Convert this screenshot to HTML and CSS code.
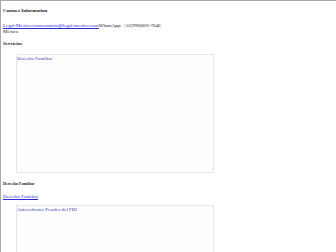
FILE: index.html
```html
<!DOCTYPE html>
<html lang="es">
<head>
    <meta charset="UTF-8">
    <meta name="viewport" content="width=device-width, initial-scale=1.0">
    <title>Legal Mexico</title>
    <link rel="stylesheet" href="styles.css">
</head>
<body>
    <div class="page">
        <h4 class="heading">Contact Information</h4>
        <p class="contact"><a href="#">Legal-Mexico.comcontacto@legal-mexico.com</a>WhatsApp: +52(998)820-7646<br>México</p>

        <h4 class="heading">Servicios</h4>
        <div class="frame">
            <span class="frame-title">Derecho Familiar</span>
        </div>

        <h5 class="subheading">Derecho Familiar</h5>
        <p class="service-link"><a href="#">Derecho Familiar</a></p>
        <div class="frame">
            <span class="frame-title">Antecedentes Penales del FBI</span>
        </div>
    </div>
</body>
</html>
```

FILE: styles.css
```css
html, body {
    margin: 0;
    padding: 0;
    background: #fff;
}
body {
    font-family: "Liberation Serif", "Times New Roman", serif;
    font-size: 5px;
    line-height: 1.15;
    color: #1a1a1a;
    border-top: 1px solid #a8a8a8;
    border-left: 1px solid #a8a8a8;
    min-height: 251px;
}
.page {
    padding: 0 2px;
}
a {
    color: #2a2ad8;
}
.heading {
    font-size: 5px;
    font-weight: bold;
    margin: 7px 0;
}
.subheading {
    font-size: 4.2px;
    font-weight: bold;
    margin: 9px 0 7px;
}
.contact {
    margin: 9px 0 5px;
}
.service-link {
    margin: 5px 0;
}
.frame {
    margin: 5px 0 5px 13px;
    width: 196px;
    height: 117px;
    border: 1px solid #e6e6e6;
    background: #fdfdfd;
}
.frame-title {
    display: block;
    color: #3a3ab8;
    padding-top: 1px;
}
```
